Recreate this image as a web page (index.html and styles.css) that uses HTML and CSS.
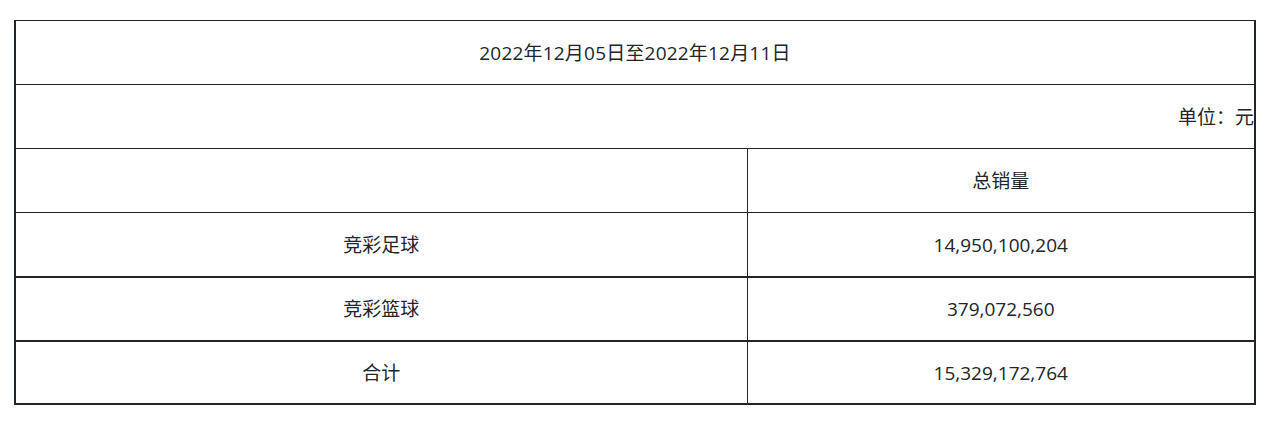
FILE: index.html
```html
<!DOCTYPE html>
<html lang="zh-CN">
<head>
	<meta charset="UTF-8">
	<title>销量</title>
	<link rel="stylesheet" href="styles.css">
</head>
<body>
	<div class="wrap">
		<table class="sales">
			<colgroup>
				<col class="col-name">
				<col class="col-total">
			</colgroup>
			<tr>
				<td colspan="2" class="title">2022年12月05日至2022年12月11日</td>
			</tr>
			<tr>
				<td colspan="2" class="unit">单位：元</td>
			</tr>
			<tr>
				<td></td>
				<td>总销量</td>
			</tr>
			<tr>
				<td>竞彩足球</td>
				<td>14,950,100,204</td>
			</tr>
			<tr class="thick">
				<td>竞彩篮球</td>
				<td>379,072,560</td>
			</tr>
			<tr class="thick last">
				<td>合计</td>
				<td>15,329,172,764</td>
			</tr>
		</table>
	</div>
</body>
</html>
```

FILE: styles.css
```css
body{
	margin: 0;
	background: #fff;
	color: #212529;
	font-family: "Open Sans", "Noto Sans CJK SC", sans-serif;
	font-size: 19px;
}
.wrap{
	padding: 20px 18px 0 14px;
}
.sales{
	width: 1242px;
	border-collapse: collapse;
	border-left: 2px solid #212529;
	border-right: 2px solid #212529;
	border-bottom: 2px solid #212529;
	table-layout: fixed;
}
.col-name{
	width: 732px;
}
.sales td{
	height: 63px;
	padding: 0;
	line-height: 24px;
	border: 1px solid #212529;
	text-align: center;
	vertical-align: middle;
}
.sales .title{
	letter-spacing: 0.2px;
}
.sales .unit{
	text-align: right;
}
.sales tr.thick td{
	height: 62px;
	border-top: 2px solid #212529;
}
.sales tr.last td{
	height: 61px;
}
```
